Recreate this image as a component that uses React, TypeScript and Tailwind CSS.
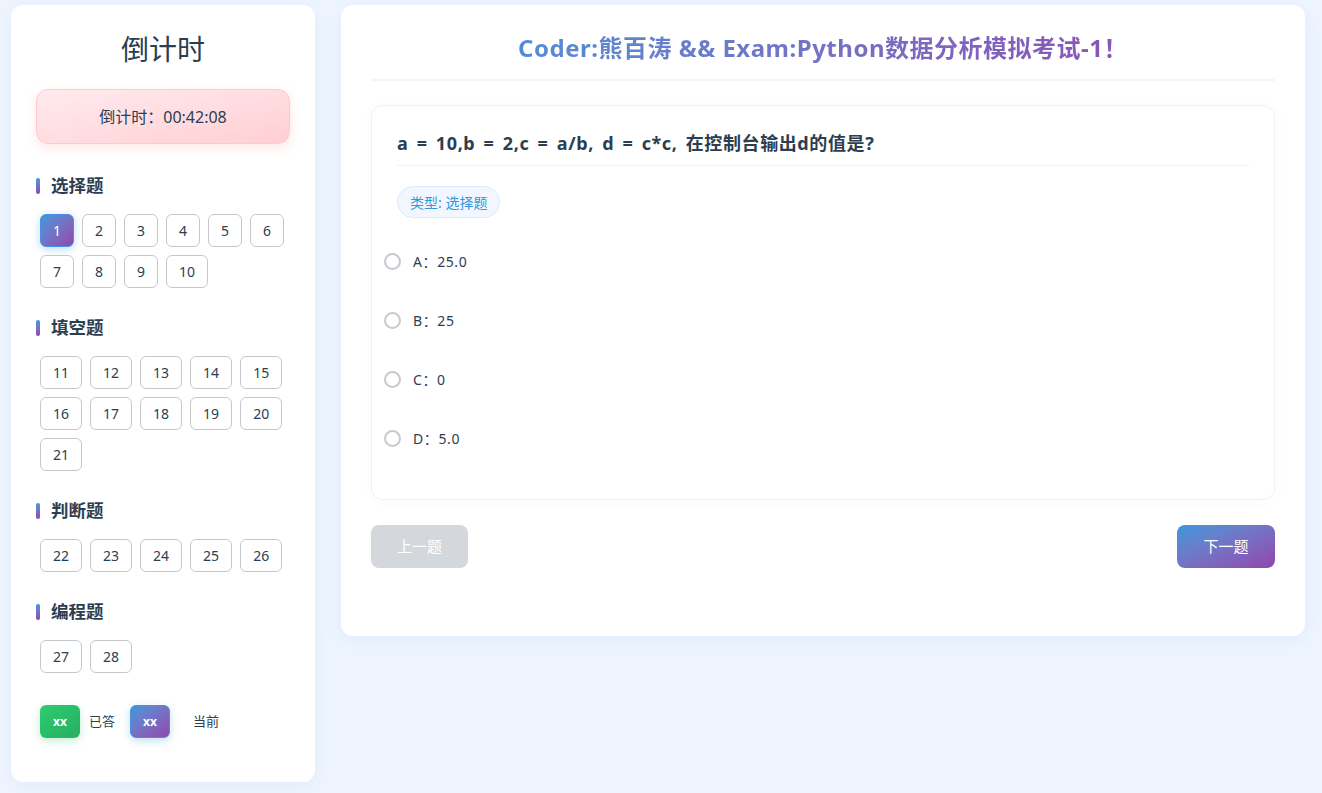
import { useState } from "react";

const sections = [
  { title: "选择题", nums: [1, 2, 3, 4, 5, 6, 7, 8, 9, 10] },
  { title: "填空题", nums: [11, 12, 13, 14, 15, 16, 17, 18, 19, 20, 21] },
  { title: "判断题", nums: [22, 23, 24, 25, 26] },
  { title: "编程题", nums: [27, 28] },
];

const options = [
  { key: "A", text: "25.0" },
  { key: "B", text: "25" },
  { key: "C", text: "0" },
  { key: "D", text: "5.0" },
];

const font = { fontFamily: '"Noto Sans", "Noto Sans CJK SC", sans-serif' };

export default function App() {
  const [current, setCurrent] = useState(1);
  const [picked, setPicked] = useState<string | null>(null);

  return (
    <div className="min-h-screen bg-[#eff5fe] text-[#2c3e50]" style={font}>
      <div className="flex items-start gap-[26px] pl-[11px] pt-[5px]">
        {/* Sidebar */}
        <aside className="w-[304px] rounded-xl bg-white px-[25px] pt-[26px] pb-[44px] shadow-[0_4px_20px_rgba(52,120,220,0.08)]">
          <h2 className="text-center text-[28px] leading-[36px] font-normal">倒计时</h2>

          <div className="mt-[22px] flex h-[55px] items-center justify-center rounded-xl border border-[#ffc8ce] bg-gradient-to-br from-[#ffebee] to-[#ffcfd4] text-[16px] shadow-[0_4px_12px_rgba(255,120,130,0.18)]">
            倒计时：00:42:08
          </div>

          <div className="mt-[28px]">
            {sections.map((s) => (
              <div key={s.title} className="mb-[26px]">
                <div className="mb-[15px] flex items-center gap-[11px]">
                  <span className="h-[16px] w-[4px] rounded-sm bg-gradient-to-b from-[#3498db] to-[#8e44ad]" />
                  <span className="text-[17.5px] leading-[27px] font-bold">{s.title}</span>
                </div>
                <div className="flex flex-wrap gap-x-[8px] gap-y-[8px] pl-[4px]">
                  {s.nums.map((n) =>
                    n === current ? (
                      <button
                        key={n}
                        onClick={() => setCurrent(n)}
                        className="h-[33px] min-w-[34px] rounded-md border border-[#4a90e2] bg-gradient-to-br from-[#3498db] to-[#8e44ad] px-3 text-[14px] text-white shadow-[0_2px_8px_rgba(52,152,219,0.35)]"
                      >
                        {n}
                      </button>
                    ) : (
                      <button
                        key={n}
                        onClick={() => setCurrent(n)}
                        className="h-[33px] min-w-[34px] rounded-md border border-[#c4c8ce] bg-white px-3 text-[14px] text-[#2c3e50]"
                      >
                        {n}
                      </button>
                    )
                  )}
                </div>
              </div>
            ))}
          </div>

          <div className="mt-[32px] flex items-center pl-[4px] text-[13px]">
            <span className="flex h-[33px] w-[40px] items-center justify-center rounded-md bg-gradient-to-br from-[#2ecc71] to-[#27ae60] text-[12px] font-bold text-white shadow-[0_3px_8px_rgba(46,204,113,0.3)]">
              xx
            </span>
            <span className="ml-[9px]">已答</span>
            <span className="ml-[15px] flex h-[33px] w-[40px] items-center justify-center rounded-md border border-[#4a90e2] bg-gradient-to-br from-[#3498db] to-[#8e44ad] text-[12px] font-bold text-white shadow-[0_3px_8px_rgba(52,152,219,0.3)]">
              xx
            </span>
            <span className="ml-[23px]">当前</span>
          </div>
        </aside>

        {/* Main */}
        <main className="w-[964px] rounded-xl bg-white px-[30px] pt-[25px] pb-[68px] shadow-[0_4px_20px_rgba(52,120,220,0.08)]">
          <h1 className="border-b-2 border-[#f1f5fb] bg-gradient-to-r from-[#3498db] to-[#8e44ad] bg-clip-text pb-[13px] text-center text-[24px] leading-[36px] font-bold tracking-[0.5px] text-transparent">
            Coder:熊百涛 &amp;&amp; Exam:Python数据分析模拟考试-1！
          </h1>

          <section className="mt-[24px] rounded-xl border border-[#eef2f8] bg-white pt-[24px] pb-[31px] shadow-[0_2px_12px_rgba(52,120,220,0.04)]">
            <div className="mx-[25px] border-b border-[#f0f4fa] pb-[8px] text-[18px] leading-[27px] font-bold tracking-[0.6px] [word-spacing:3px]">
              a = 10,b = 2,c = a/b, d = c*c, 在控制台输出d的值是?
            </div>
            <div className="mx-[25px] mt-[20px]">
              <span className="inline-flex h-[32px] items-center rounded-full border border-[#dde9fa] bg-[#f2f7ff] px-[12px] text-[14px] text-[#3498db]">
                类型: 选择题
              </span>
            </div>
            <div className="mt-[14px] px-[12px]">
              {options.map((o) => (
                <label key={o.key} className="flex h-[59px] cursor-pointer items-center gap-[12px] text-[14px]">
                  <span
                    onClick={() => setPicked(o.key)}
                    className={`h-[17px] w-[17px] rounded-full border-2 ${picked === o.key ? "border-[#3498db] bg-[#3498db]" : "border-[#c6cace]"}`}
                  />
                  <span className="tracking-[0.6px]">
                    {o.key}：{o.text}
                  </span>
                </label>
              ))}
            </div>
          </section>

          <div className="mt-[25px] flex justify-between">
            <button className="h-[43px] w-[97px] rounded-lg bg-[#d4d7db] text-[15px] text-white">上一题</button>
            <button className="h-[43px] w-[98px] rounded-lg bg-gradient-to-br from-[#3498db] to-[#8e44ad] text-[15px] text-white">
              下一题
            </button>
          </div>
        </main>
      </div>
    </div>
  );
}
